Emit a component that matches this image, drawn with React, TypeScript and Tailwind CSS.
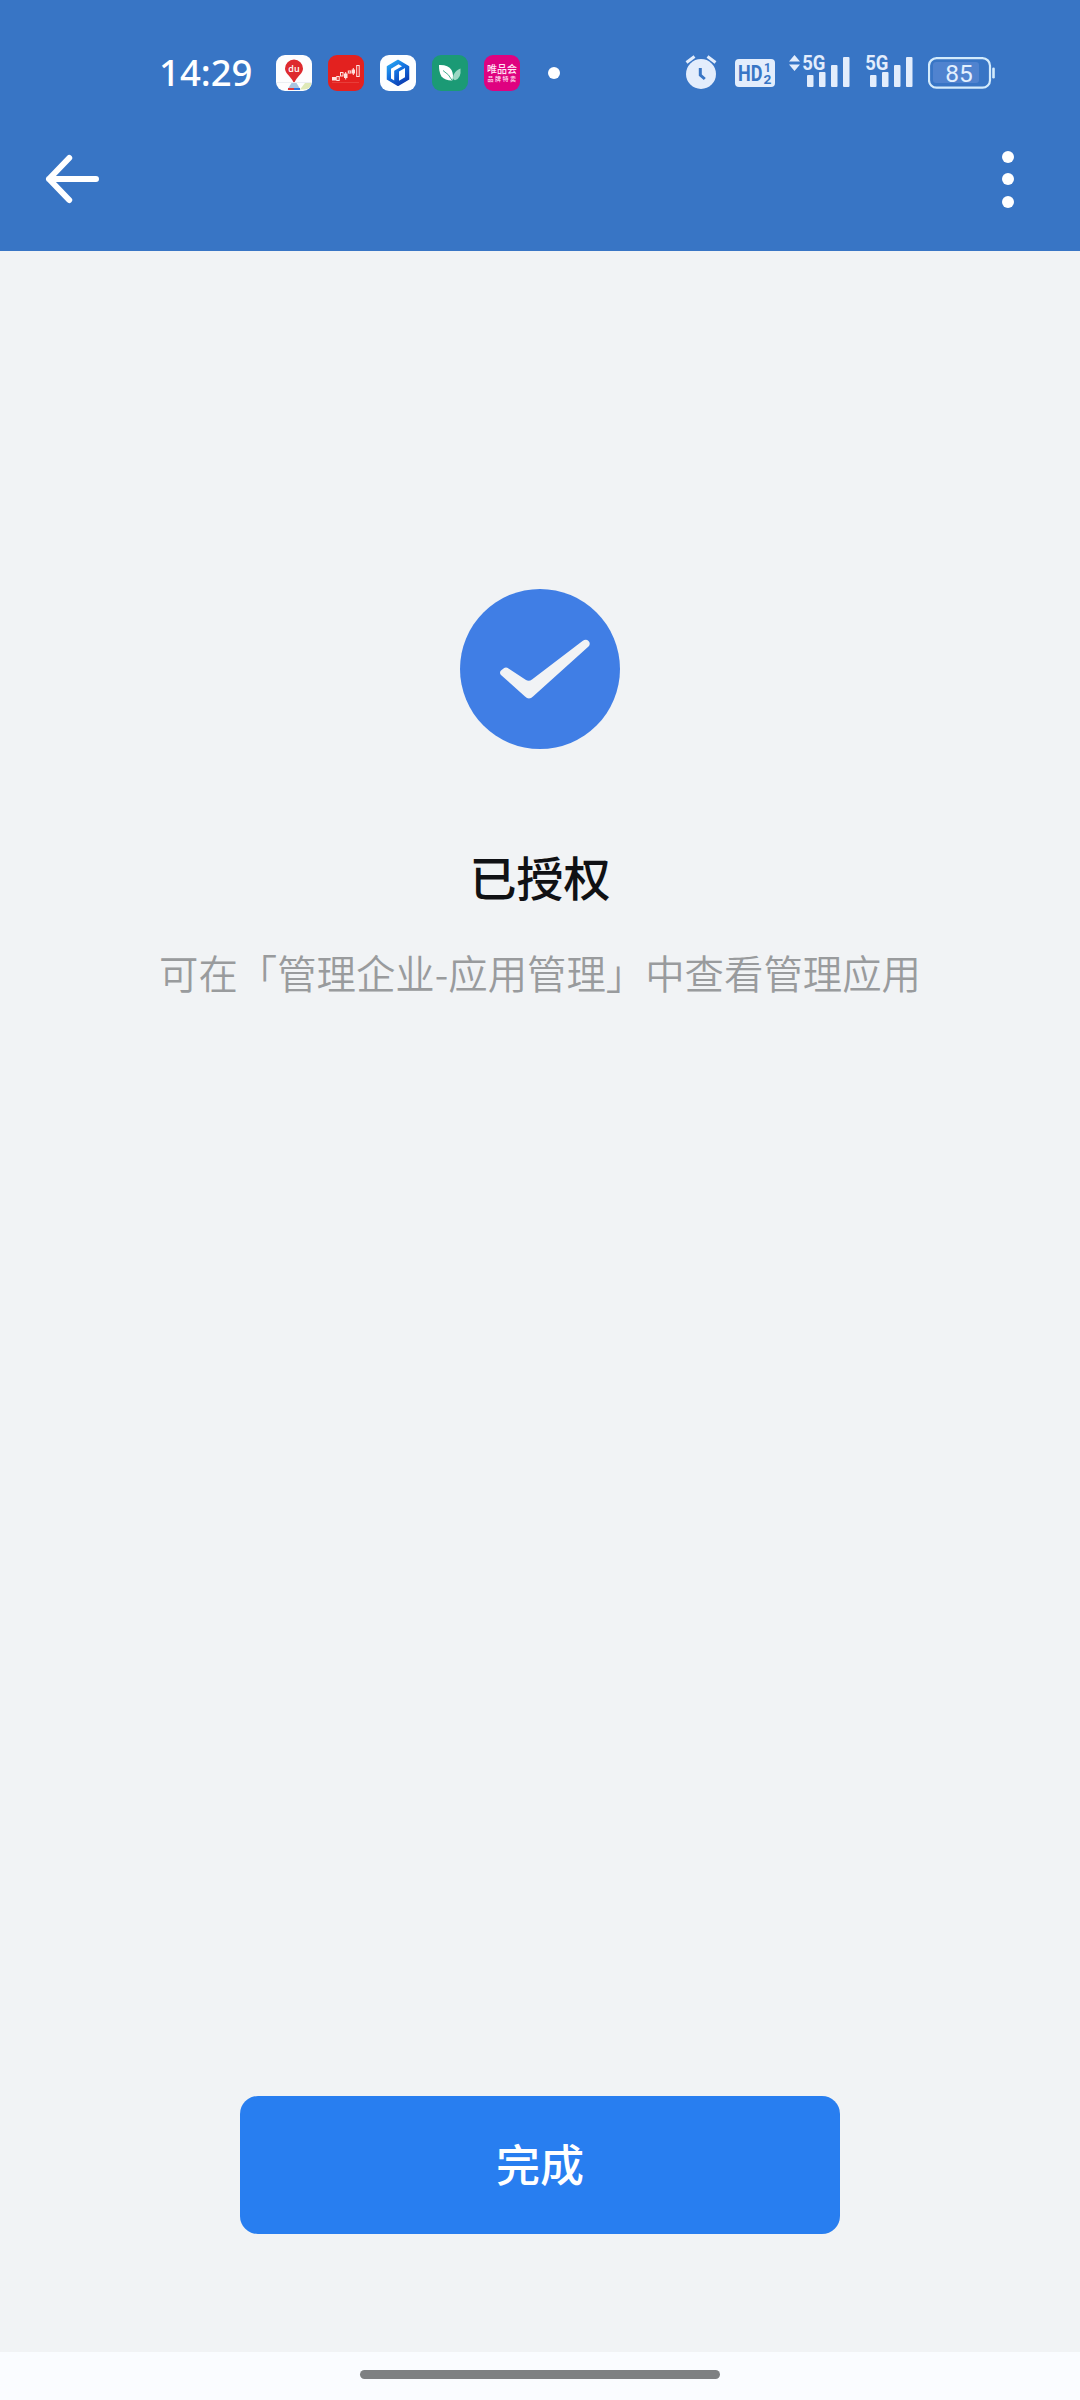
import React from "react";

const MapAppIcon: React.FC = () => (
  <svg width="36" height="36" viewBox="0 0 36 36">
    <rect width="36" height="36" rx="9" fill="#fdfdfe" />
    <path d="M1 27h34v1H1z" fill="#eceef2" />
    <path d="M24 34.500l5-6.500h6v2q-1 4-7 4.500z" fill="#dfe9b8" />
    <path d="M15.500 28h5l4 6.500h-13z" fill="#a9c4e0" />
    <path d="M12 33h6v2h-6z" fill="#e0343a" />
    <path d="M18 33h6v2h-6z" fill="#2f6fe0" />
    <path
      d="M18 4.500a9 9 0 0 1 9 9c0 4.500-4.500 7-7.300 11.500q-1.700 4.500-3.400 0C13.500 20.500 9 18 9 13.500a9 9 0 0 1 9-9z"
      fill="#de2a2f"
    />
    <text
      x="18"
      y="16.800"
      textAnchor="middle"
      fontSize="9"
      className="fill-white font-['Open_Sans',sans-serif] font-semibold"
    >
      du
    </text>
  </svg>
);

const StockAppIcon: React.FC = () => (
  <svg width="36" height="36" viewBox="0 0 36 36">
    <rect width="36" height="36" rx="9" fill="#e3211f" />
    <path d="M4 27.500h27" stroke="#ea4a45" strokeWidth="0.700" />
    <g fill="none" stroke="#ffe3df" strokeWidth="1">
      <rect x="8.700" y="21.500" width="2.500" height="4" />
      <rect x="12.500" y="17.500" width="2.500" height="3.500" />
      <rect x="20.300" y="16" width="2.500" height="2" />
      <rect x="28.700" y="10.500" width="2.500" height="11" />
      <path d="M17.700 17v7.500M25.300 13v7" />
    </g>
    <g fill="#ffe3df">
      <rect x="4" y="22" width="4" height="3.500" />
      <rect x="16" y="18.500" width="3.500" height="4.500" />
      <rect x="23.700" y="14.500" width="3.300" height="4" />
    </g>
  </svg>
);

const CubeAppIcon: React.FC = () => (
  <svg width="36" height="36" viewBox="0 0 36 36">
    <defs>
      <linearGradient id="cube" x1="0" y1="0" x2="0.6" y2="1">
        <stop offset="0" stopColor="#2bb0f4" />
        <stop offset="0.500" stopColor="#1573e0" />
        <stop offset="1" stopColor="#0b3fb4" />
      </linearGradient>
    </defs>
    <rect width="36" height="36" rx="9" fill="#fdfeff" />
    <path
      d="M18 5.500l10.500 6.100v12.600L18 30.300 7.500 24.200V11.600z"
      fill="url(#cube)"
      stroke="url(#cube)"
      strokeWidth="1.500"
      strokeLinejoin="round"
    />
    <path d="M11 13.700l7.500-4.400 3.500 2-7.800 4.500v9.700L11 23.600z" fill="#fff" />
    <path d="M19 16.500l6-3.500v9.200l-6 3.500z" fill="#fff" />
  </svg>
);

const LeafAppIcon: React.FC = () => (
  <svg width="36" height="36" viewBox="0 0 36 36">
    <rect width="36" height="36" rx="9" fill="#1b9a75" />
    <path d="M28.500 13.500q1 10-5.500 11.700-3.500-1-1-6.200 2-4 6.500-5.500z" fill="#9bd8c4" />
    <path d="M7 10q9-.5 12.500 5 2.500 4.500.8 10.500-7 .2-10.800-4Q6.800 17 7 10z" fill="#fff" />
    <path d="M11 15.500q6 3.500 9.200 10" stroke="#1b9a75" strokeWidth="0.800" fill="none" />
  </svg>
);

const ShopAppIcon: React.FC = () => (
  <svg width="36" height="36" viewBox="0 0 36 36">
    <rect width="36" height="36" rx="9" fill="#df0280" />
    <g className="fill-[#ffe6f4] font-['Noto_Sans_CJK_SC',sans-serif] font-medium">
      <text x="3" y="17.800" fontSize="10">
        唯品会
      </text>
      <text x="3.500" y="25.800" fontSize="6" letterSpacing="1.500">
        品牌特卖
      </text>
    </g>
  </svg>
);

const AlarmIcon: React.FC = () => (
  <svg width="32" height="36" viewBox="0 0 32 36">
    <circle cx="16" cy="19" r="15" fill="#e3edfc" />
    <path d="M1.500 7.500l8-6M30.500 7.500l-8-6" stroke="#e3edfc" strokeWidth="3" />
    <path d="M15.300 13v7l4.500 4" stroke="#3875c5" strokeWidth="3" fill="none" />
  </svg>
);

const HdIcon: React.FC = () => (
  <svg width="40" height="28" viewBox="0 0 40 28">
    <rect width="40" height="28" rx="4" fill="#e3edfc" />
    <g className="fill-[#3875c5] font-['Roboto',sans-serif] font-bold">
      <text fontSize="22.500" transform="translate(3 21.7) scale(0.8 1)">
        HD
      </text>
      <text x="29" y="13" fontSize="12">
        1
      </text>
      <text transform="translate(28.6 25) scale(1.1 1)" fontSize="12.500">
        2
      </text>
    </g>
  </svg>
);

const SignalIcon: React.FC = () => (
  <svg width="47" height="34" viewBox="0 0 47 34" className="overflow-visible">
    <g fill="#e3edfc">
      <rect x="4" y="20" width="6.500" height="12" rx="1" />
      <rect x="16" y="17" width="6.500" height="15" rx="1" />
      <rect x="28" y="10" width="6.500" height="22" rx="1" />
      <rect x="40" y="2" width="6.500" height="30" rx="1" />
    </g>
    <text
      fontSize="21"
      transform="translate(-0.8 15) scale(0.88 1)"
      className="fill-[#e3edfc] font-['Roboto',sans-serif] font-bold"
    >
      5G
    </text>
  </svg>
);

const BatteryIcon: React.FC = () => (
  <svg width="67" height="32" viewBox="0 0 67 32">
    <rect x="5" y="5" width="46" height="21" rx="3" fill="#5083cf" />
    <rect x="1" y="1.200" width="61" height="29.500" rx="7.500" fill="none" stroke="#d3ebfc" strokeWidth="2.200" />
    <rect x="64.200" y="10.500" width="2.600" height="11" rx="1.300" fill="#d3ebfc" />
    <text
      x="31"
      y="24.500"
      textAnchor="middle"
      fontSize="24.500"
      className="fill-[#e3f0fe] font-['Roboto',sans-serif]"
    >
      85
    </text>
  </svg>
);

const StatusBar: React.FC = () => (
  <div className="flex h-[146px] items-center pl-[159px] pr-[85px]">
    <span className="w-[101px] whitespace-nowrap pb-0.5 font-['Noto_Sans',sans-serif] text-[36.500px] font-medium leading-none text-white">
      14:29
    </span>
    <div className="ml-4 flex gap-4">
      <MapAppIcon />
      <StockAppIcon />
      <CubeAppIcon />
      <LeafAppIcon />
      <ShopAppIcon />
    </div>
    <span className="ml-7 size-3 rounded-full bg-white" />

    <div className="ml-auto flex items-center">
      <AlarmIcon />
      <span className="ml-[18px]">
        <HdIcon />
      </span>
      <svg className="mb-5 ml-[14px] mr-[3px]" width="11" height="16" viewBox="0 0 11 16">
        <path d="M5.500 0L11 6.500H0zM5.500 16L11 9.500H0z" fill="#e3edfc" />
      </svg>
      <span className="-mt-0.5">
        <SignalIcon />
      </span>
      <span className="-mt-0.5 ml-[16px]">
        <SignalIcon />
      </span>
      <span className="ml-[15px]">
        <BatteryIcon />
      </span>
    </div>
  </div>
);

const NavBar: React.FC = () => (
  <div className="flex h-[66px] items-center justify-between pl-[45px] pr-[66px]">
    <button type="button" aria-label="返回">
      <svg width="56" height="50" viewBox="0 0 56 50">
        <path
          d="M24.200 4L4 25l20.200 21M4 25h47"
          fill="none"
          stroke="#fff"
          strokeWidth="6"
          strokeLinecap="round"
          strokeLinejoin="round"
        />
      </svg>
    </button>
    <button type="button" aria-label="更多" className="flex flex-col gap-[10.500px]">
      <span className="size-3 rounded-full bg-white" />
      <span className="size-3 rounded-full bg-white" />
      <span className="size-3 rounded-full bg-white" />
    </button>
  </div>
);

const App: React.FC = () => {
  return (
    <div className="flex h-[2400px] w-[1080px] flex-col bg-[#f1f3f5] font-['Noto_Sans_CJK_SC',sans-serif]">
      <header className="h-[251px] bg-[#3875c5]">
        <StatusBar />
        <NavBar />
      </header>

      <main className="flex flex-1 flex-col items-center pt-[338px]">
        <svg width="160" height="160" viewBox="0 0 160 160">
          <circle cx="80" cy="80" r="80" fill="#407ee5" />
          <path
            d="M43.500 79.500q2.500-2 5 0L66 91q3 1.700 6-.5l50.500-38.500q3.500-2.500 6 0t0 5.500L73 107.500q-4 4-8 0L41 86q-2-2.500 0-4.500z"
            fill="#f1f3f5"
          />
        </svg>
        <h1 className="mt-[92px] text-[47px] font-medium leading-[70px] text-[#101114]">
          已授权
        </h1>
        <p className="mt-[32px] whitespace-nowrap text-[39.400px] font-[350] leading-[58px] text-[#999b9d]">
          可在「管理企业-应用管理」中查看管理应用
        </p>
        <button
          type="button"
          className="mb-[118px] mt-auto h-[138px] w-[600px] rounded-[18px] bg-[#287ef0] pb-1 text-[44px] font-medium text-white"
        >
          完成
        </button>
      </main>

      <footer className="flex h-12 justify-center bg-[#fafcff] pt-[18px]">
        <div className="h-[9px] w-[360px] rounded-full bg-[#7e8082]" />
      </footer>
    </div>
  );
};

export default App;
